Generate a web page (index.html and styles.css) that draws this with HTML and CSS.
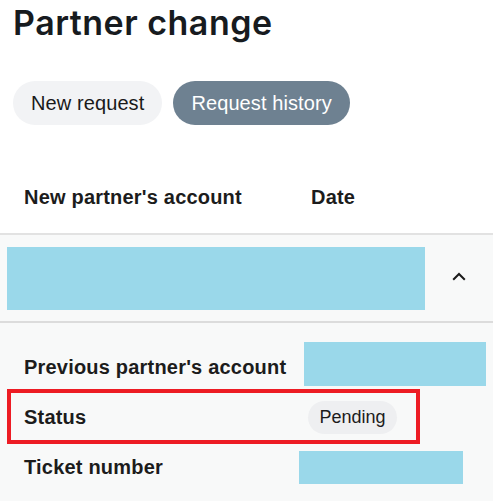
FILE: index.html
```html
<!DOCTYPE html>
<html>
<head>
<meta charset="utf-8">
<link rel="stylesheet" href="styles.css">
</head>
<body>
<h1 class="title">Partner change</h1>
<div class="tabs">
  <button class="tab">New request</button>
  <button class="tab tab-active">Request history</button>
</div>
<div class="table-head">
  <div class="th th-account">New partner's account</div>
  <div class="th th-date">Date</div>
</div>
<div class="row-main">
  <div class="redact redact-main"></div>
  <div class="chevron">
    <svg width="14" height="9" viewBox="0 0 14 9"><path d="M1.2 7.8 L7 2 L12.8 7.8" fill="none" stroke="#1b1b1b" stroke-width="2"/></svg>
  </div>
</div>
<div class="details">
  <div class="detail-row">
    <div class="label">Previous partner's account</div>
    <div class="value"><div class="redact redact-prev"></div></div>
  </div>
  <div class="detail-row detail-status">
    <div class="label">Status</div>
    <div class="value"><span class="pill">Pending</span></div>
    <div class="highlight"></div>
  </div>
  <div class="detail-row">
    <div class="label">Ticket number</div>
    <div class="value"><div class="redact redact-ticket"></div></div>
  </div>
</div>
</body>
</html>
```
FILE: styles.css
```css
html, body {
  margin: 0;
  padding: 0;
  background: #ffffff;
  font-family: "Liberation Sans", Arial, sans-serif;
  color: #1c1c1c;
}
body {
  width: 493px;
  height: 501px;
  overflow: hidden;
}
.title {
  margin: 0;
  padding: 2px 0 0 13px;
  height: 48px;
  font-family: "Inter", "Noto Sans", sans-serif;
  font-weight: 600;
  font-size: 34px;
  line-height: 42px;
  color: #171b1f;
  letter-spacing: 0.5px;
}
.tabs {
  display: flex;
  gap: 11px;
  padding: 31px 0 0 13px;
}
.tab {
  height: 44px;
  border: none;
  border-radius: 22px;
  padding: 0 18px;
  font-family: "Liberation Sans", Arial, sans-serif;
  font-size: 20px;
  letter-spacing: 0.1px;
  background: #f2f3f5;
  color: #1a1a1a;
}
.tab-active {
  background: #6e8191;
  color: #ffffff;
}
.table-head {
  display: flex;
  align-items: flex-start;
  box-sizing: border-box;
  height: 110px;
  padding-top: 61px;
  border-bottom: 2px solid #e2e2e2;
}
.th {
  font-weight: bold;
  font-size: 20px;
  line-height: 23px;
  letter-spacing: 0.2px;
  color: #1c1c1c;
}
.th-account {
  padding-left: 24px;
  width: 287px;
}
.row-main {
  display: flex;
  align-items: center;
  height: 86px;
  background: #f8f9f9;
  border-bottom: 2px solid #dcdcdc;
}
.redact {
  background: #9ad8ea;
}
.redact-main {
  margin-left: 7px;
  width: 418px;
  height: 63px;
}
.chevron {
  flex: 1;
  display: flex;
  justify-content: center;
  padding-bottom: 4px;
}
.details {
  background: #f8f9f9;
  padding-top: 19px;
  height: 160px;
}
.detail-row {
  position: relative;
  display: flex;
  align-items: center;
  height: 50px;
}
.label {
  padding-left: 24px;
  width: 275px;
  font-weight: bold;
  font-size: 20px;
  letter-spacing: 0.2px;
  color: #1c1c1c;
}
.value {
  display: flex;
  align-items: center;
}
.redact-prev {
  margin-left: 5px;
  width: 182px;
  height: 44px;
  margin-top: -6px;
}
.redact-ticket {
  width: 164px;
  height: 33px;
  margin-top: 1px;
}
.pill {
  margin-left: 9px;
  height: 33px;
  line-height: 33px;
  padding: 0 11.5px;
  border-radius: 17px;
  background: #eeeff1;
  font-size: 18px;
  color: #1c1c1c;
}
.highlight {
  position: absolute;
  left: 7px;
  top: -3px;
  width: 405px;
  height: 47px;
  border: 4px solid #ed1c24;
}
```
